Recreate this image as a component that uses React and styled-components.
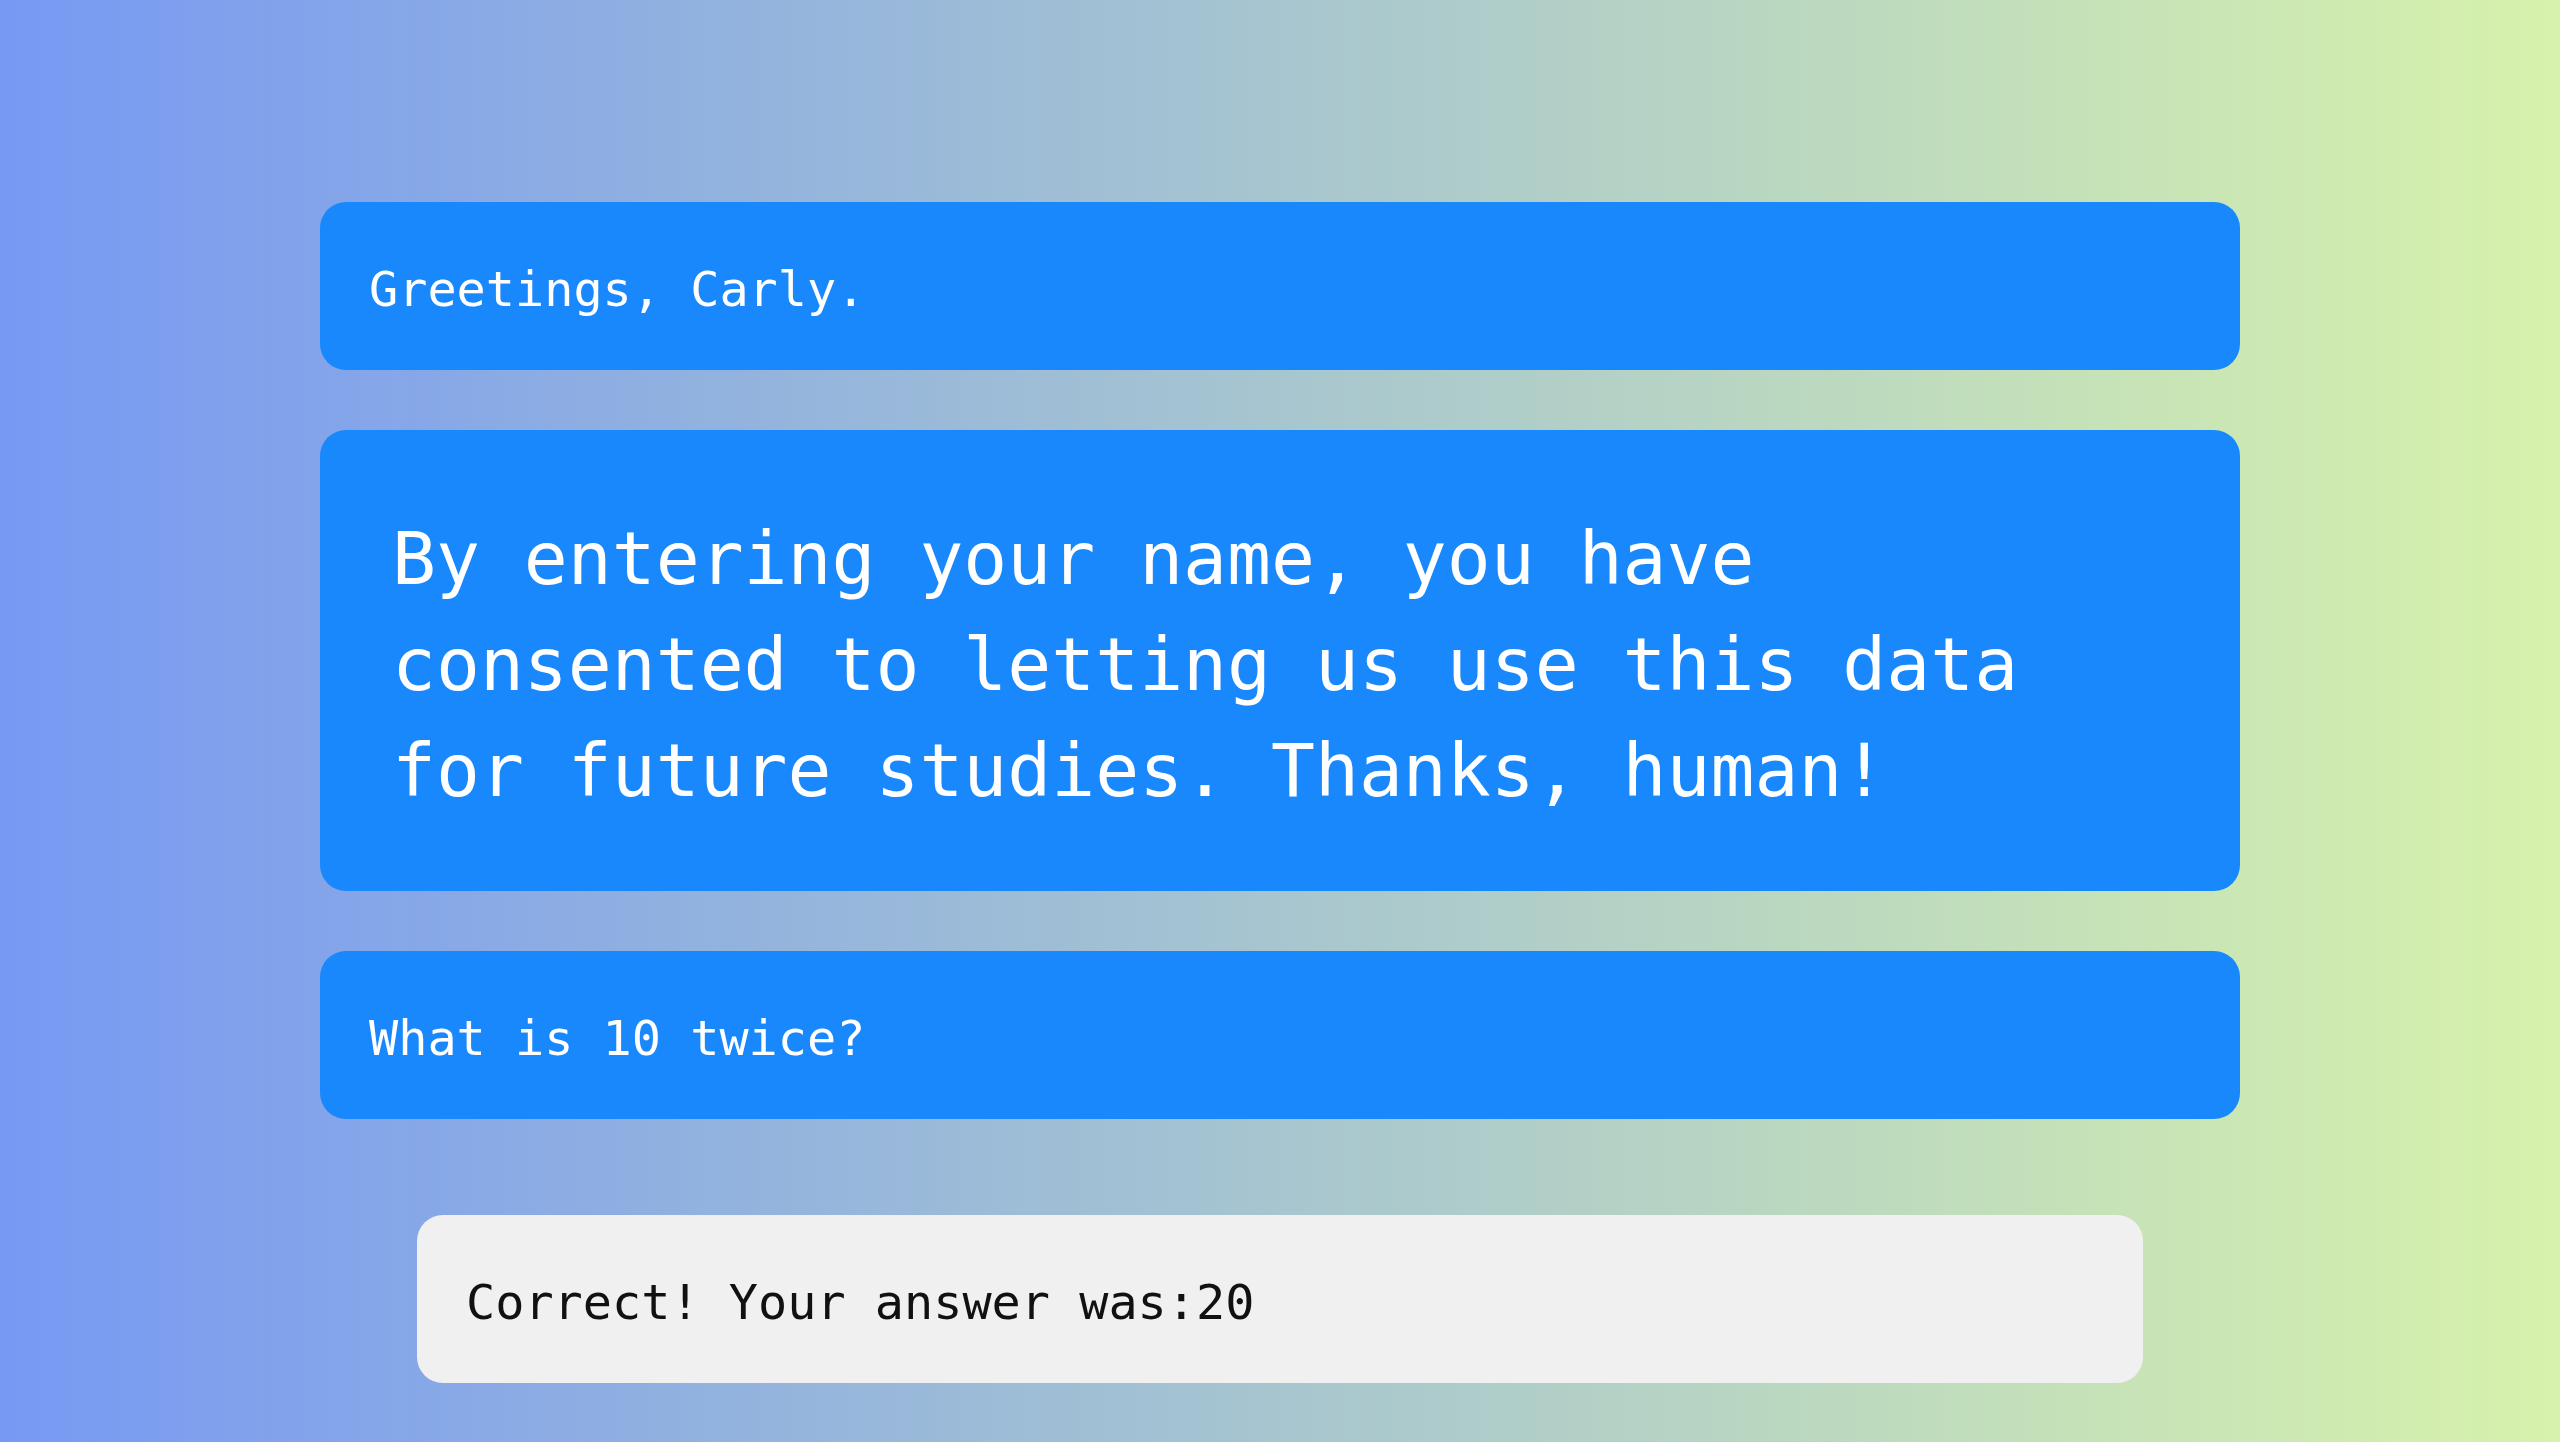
import React from 'react'
import styled, { createGlobalStyle } from 'styled-components';

const GlobalStyle = createGlobalStyle`
  html, body {
    margin: 0;
    padding: 0;
  }
  body {
    font-family: "DejaVu Sans Mono", "Liberation Mono", monospace;
  }
`

const Page = styled.div`
  min-height: 100vh;
  box-sizing: border-box;
  padding-top: 202px;
  background: linear-gradient(90deg, #7799f3 0%, #d7f2ab 100%);
  display: flex;
  flex-direction: column;
  align-items: center;
`

const Card = styled.div`
  box-sizing: border-box;
  width: ${props => props.wide ? "1920px" : "1726px"};
  margin-top: ${props => props.gap || 0}px;
  border-radius: 26px;
  background: ${props => props.light ? "#f0f0f0" : "#1888fc"};
  color: ${props => props.light ? "#111111" : "#ffffff"};
`

const Line = styled.p`
  margin: 0;
  height: 168px;
  box-sizing: border-box;
  padding: 6px 49px 0;
  display: flex;
  align-items: center;
  font-size: 48.5px;
  line-height: 1;
`

const Notice = styled.p`
  margin: 0;
  padding: 76px 140px 67px 72px;
  font-size: 73px;
  line-height: 106px;
`

const App = () => {
  return (
    <>
      <GlobalStyle />
      <Page>
        <Card wide>
          <Line>Greetings, Carly.</Line>
        </Card>
        <Card wide gap={60}>
          <Notice>
            By entering your name, you have consented to letting us use this data for future studies. Thanks, human!
          </Notice>
        </Card>
        <Card wide gap={60}>
          <Line>What is 10 twice?</Line>
        </Card>
        <Card light gap={96}>
          <Line>Correct! Your answer was:20</Line>
        </Card>
      </Page>
    </>
  )
}

export default App;
